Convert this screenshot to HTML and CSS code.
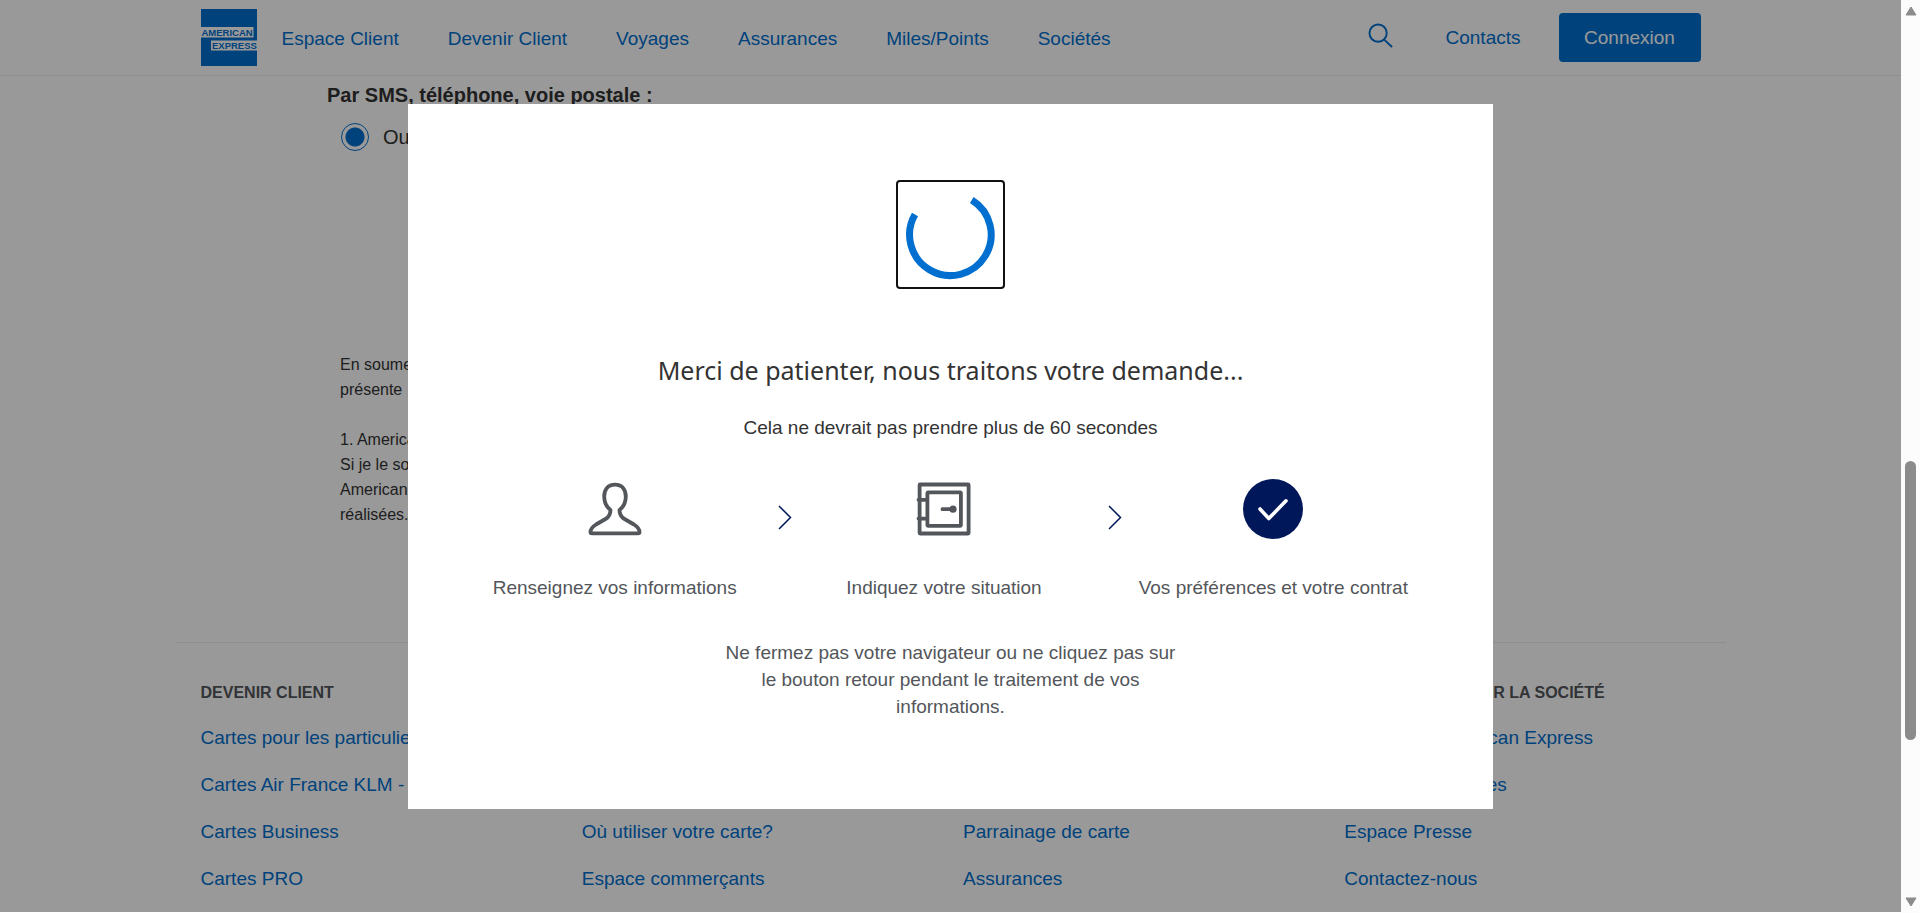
FILE: index.html
```html
<!DOCTYPE html>
<html lang="fr">
<head>
<meta charset="utf-8">
<meta name="viewport" content="width=device-width, initial-scale=1">
<title>American Express - Demande de carte</title>
<link rel="stylesheet" href="styles.css">
</head>
<body>
<div class="window">
  <div class="page">
    <header class="header">
      <div class="header-inner">
        <a class="logo" href="#" aria-label="American Express">
          <svg viewBox="0 0 112 114" aria-hidden="true">
            <rect width="112" height="114" fill="#006fcf"/>
            <path d="M0 36H105V57H0zM20 63H112V83H20z" fill="#fff"/>
            <text class="logo-text" x="1" y="53">AMERICAN</text>
            <text class="logo-text" x="22" y="80">EXPRESS</text>
          </svg>
        </a>
        <nav class="nav">
          <a href="#">Espace Client</a>
          <a href="#">Devenir Client</a>
          <a href="#">Voyages</a>
          <a href="#">Assurances</a>
          <a href="#">Miles/Points</a>
          <a href="#">Sociétés</a>
        </nav>
        <div class="tools">
          <button class="search" type="button" aria-label="Rechercher">
            <svg viewBox="0 0 26 26" fill="none" stroke="#006fcf" stroke-width="2"><circle cx="10.500" cy="10.500" r="9"/><path d="M16.500 17L25 25"/></svg>
          </button>
          <a class="contacts" href="#">Contacts</a>
          <button class="login" type="button">Connexion</button>
        </div>
      </div>
    </header>

    <main class="content">
      <fieldset class="consent">
        <legend>Par SMS, téléphone, voie postale :</legend>
        <div class="choice"><input type="radio" id="oui" name="contact" checked><label for="oui">Oui</label></div>
      </fieldset>
      <p class="legal">En soumettant ma demande, je confirme avoir lu et accepté la<br>présente</p>
      <p class="legal">1. American Express<br>Si je le souhaite, je peux demander à<br>American Express les informations sur les opérations<br>réalisées.</p>
    </main>

    <footer class="footer">
      <section><h2>DEVENIR CLIENT</h2><ul>
        <li><a href="#">Cartes pour les particuliers</a></li><li><a href="#">Cartes Air France KLM - American Express</a></li><li><a href="#">Cartes Business</a></li><li><a href="#">Cartes PRO</a></li></ul></section>
      <section><h2>ESPACE CLIENT</h2><ul>
        <li><a href="#">Espace Client</a></li><li><a href="#">Voyages</a></li><li><a href="#">Où utiliser votre carte?</a></li><li><a href="#">Espace commerçants</a></li></ul></section>
      <section><h2>SERVICES</h2><ul>
        <li><a href="#">Miles/Points</a></li><li><a href="#">Voyages</a></li><li><a href="#">Parrainage de carte</a></li><li><a href="#">Assurances</a></li></ul></section>
      <section><h2>INFORMATIONS SUR LA SOCIÉTÉ</h2><ul>
        <li><a href="#">A propos d'American Express</a></li><li><a href="#">Métiers et carrières</a></li><li><a href="#">Espace Presse</a></li><li><a href="#">Contactez-nous</a></li></ul></section>
    </footer>

    <div class="overlay">
      <div class="modal" role="dialog" aria-modal="true" aria-labelledby="wait">
        <div class="spinner" tabindex="-1">
          <svg viewBox="0 0 105 105" fill="none" stroke="#006fcf" stroke-width="7"><path d="M73.800 18A40.800 40.800 0 1 1 17 32.400"/></svg>
        </div>
        <h1 id="wait">Merci de patienter, nous traitons votre demande...</h1>
        <p class="delay">Cela ne devrait pas prendre plus de 60 secondes</p>
        <ol class="steps">
          <li class="step">
            <svg class="step-icon" viewBox="0 0 60 60" fill="none" stroke="#53565a" stroke-width="3.800" stroke-linejoin="round"><path d="M30 5.700C22.500 5.700 19.200 11 19.200 17.500C19.200 24 21.500 28 25.500 31C25.500 36 24 38 20.500 40L11 45.500C7 48 5.500 50.500 5.500 53Q5.500 54.300 7 54.300H53Q54.500 54.300 54.500 53C54.500 50.500 53 48 49 45.500L39.500 40C36 38 34.500 36 34.500 31C38.500 28 40.800 24 40.800 17.500C40.800 11 37.500 5.700 30 5.700Z"/></svg>
            <span>Renseignez vos informations</span>
          </li>
          <li class="next" aria-hidden="true"><svg viewBox="0 0 26 26" fill="none" stroke="#00175a" stroke-width="1.500"><path d="M13 2L24.500 13.500L13 25"/></svg></li>
          <li class="step">
            <svg class="step-icon" viewBox="0 0 60 60" fill="none" stroke="#53565a" stroke-width="3.800" stroke-linejoin="round" stroke-linecap="round"><rect x="5.600" y="5.500" width="49" height="49" rx=".5"/><rect x="13.400" y="13.300" width="33.500" height="33.500" rx="1"/><path d="M4.500 20.800H13M4.500 39.600H13M28.500 30.200H38"/><circle cx="39" cy="30.200" r="3.600" fill="#53565a" stroke="none"/></svg>
            <span>Indiquez votre situation</span>
          </li>
          <li class="next" aria-hidden="true"><svg viewBox="0 0 26 26" fill="none" stroke="#00175a" stroke-width="1.500"><path d="M13 2L24.500 13.500L13 25"/></svg></li>
          <li class="step">
            <svg class="step-icon" viewBox="0 0 60 60"><circle cx="30" cy="30" r="30" fill="#00175a"/><path d="M17 30L25.800 39.500L43 21.800" fill="none" stroke="#fff" stroke-width="3.600" stroke-linecap="round" stroke-linejoin="round"/></svg>
            <span>Vos préférences et votre contrat</span>
          </li>
        </ol>
        <p class="notice">Ne fermez pas votre navigateur ou ne cliquez pas sur le bouton retour pendant le traitement de vos informations.</p>
      </div>
    </div>
  </div>

  <div class="scrollbar" aria-hidden="true">
    <svg class="arrow" viewBox="0 0 12 10"><path d="M6 1L11 9H1Z"/></svg>
    <div class="track"><div class="thumb"></div></div>
    <svg class="arrow" viewBox="0 0 12 10"><path d="M6 9L11 1H1Z"/></svg>
  </div>
</div>
</body>
</html>
```

FILE: styles.css
```css
*, *::before, *::after { box-sizing: border-box; }
body {
  margin: 0;
  background: #fff;
  color: #333;
  font: 19px/28px "Liberation Sans", Arial, sans-serif;
}
h1, h2, p, ul, ol, fieldset { margin: 0; padding: 0; border: 0; }
ul, ol { list-style: none; }
button { padding: 0; border: 0; background: none; font: inherit; cursor: pointer; }
a { color: #006fcf; text-decoration: none; }
svg { display: block; }

.window { display: flex; height: 100vh; }
.page { position: relative; flex: 1; min-width: 0; margin-bottom: 1px; overflow: hidden; }

.header { height: 76px; border-bottom: 1px solid #ecedee; }
.header-inner {
  display: flex;
  align-items: center;
  max-width: 1500px;
  height: 75px;
  margin: 0 auto;
}
.logo svg { width: 56px; height: 57px; }
.logo-text { font: bold 19px "Liberation Sans", Arial, sans-serif; fill: #006fcf; }
.nav { display: flex; gap: 49px; margin-left: 25px; padding-top: 2px; }
.tools { display: flex; align-items: center; margin-left: auto; }
.search svg { width: 25px; height: 25px; }
.search { padding-bottom: 4px; }
.contacts { margin: 0 38px 0 53px; }
.login {
  width: 142px;
  height: 49px;
  border-radius: 4px;
  background: #006fcf;
  color: #fff;
}

.content { max-width: 1247px; margin: 0 auto; padding-top: 5px; }
.consent { margin-bottom: 201px; }
.consent legend { padding: 0; font-size: 20px; font-weight: bold; }
.choice { display: flex; align-items: center; gap: 14px; margin: 14px 0 0 14px; font-size: 20px; }
.choice input {
  appearance: none;
  width: 28px;
  height: 28px;
  margin: 0;
  border: 1px solid #006fcf;
  border-radius: 50%;
  background: radial-gradient(circle, #006fcf 9px, #fff 10px);
}
.legal { margin: 0 0 25px 13px; font-size: 16px; line-height: 25px; }

.footer {
  display: grid;
  grid-template-columns: repeat(4, 1fr);
  max-width: 1550px;
  margin: 115px auto 0;
  padding: 35px 0 0 25px;
  border-top: 1px solid #ecedee;
}
.footer h2 { margin-bottom: 16px; color: #53565a; font-size: 16px; line-height: 30px; white-space: nowrap; }
.footer li { height: 47px; white-space: nowrap; }

.overlay {
  position: absolute;
  inset: 0;
  display: flex;
  align-items: center;
  justify-content: center;
  padding-top: 1px;
  background: rgba(0, 0, 0, .4);
}
.modal {
  display: flex;
  flex-direction: column;
  align-items: center;
  width: 100%;
  max-width: 1085px;
  padding: 76px 0 89px;
  background: #fff;
}
.spinner { width: 109px; height: 109px; border: 2px solid #111; border-radius: 4px; }
.modal h1 { margin-top: 63px; font: 25px/36px "Noto Sans", sans-serif; }
.delay { margin-top: 26px; }
.steps { display: flex; width: 100%; margin-top: 37px; padding: 0 68px 0 55px; color: #53565a; }
.step { display: flex; flex: 1 1 0; flex-direction: column; align-items: center; gap: 35px; min-width: 0; white-space: nowrap; }
.step-icon { width: 60px; height: 60px; }
.next { width: 26px; padding-top: 25px; }
.next svg { width: 26px; height: 26px; }
.notice { width: 450px; margin-top: 37px; color: #53565a; line-height: 27px; text-align: center; }

.scrollbar {
  display: flex;
  flex-direction: column;
  align-items: center;
  width: 19px;
  padding: 6px 0;
  background: #fcfcfc;
}
.arrow { width: 12px; height: 10px; fill: #8b8b8b; stroke: #8b8b8b; stroke-linejoin: round; }
.track { display: flex; flex: 1; align-items: center; }
.thumb { width: 11px; height: 279px; margin-top: 288px; border-radius: 6px; background: #8b8b8b; }
```
